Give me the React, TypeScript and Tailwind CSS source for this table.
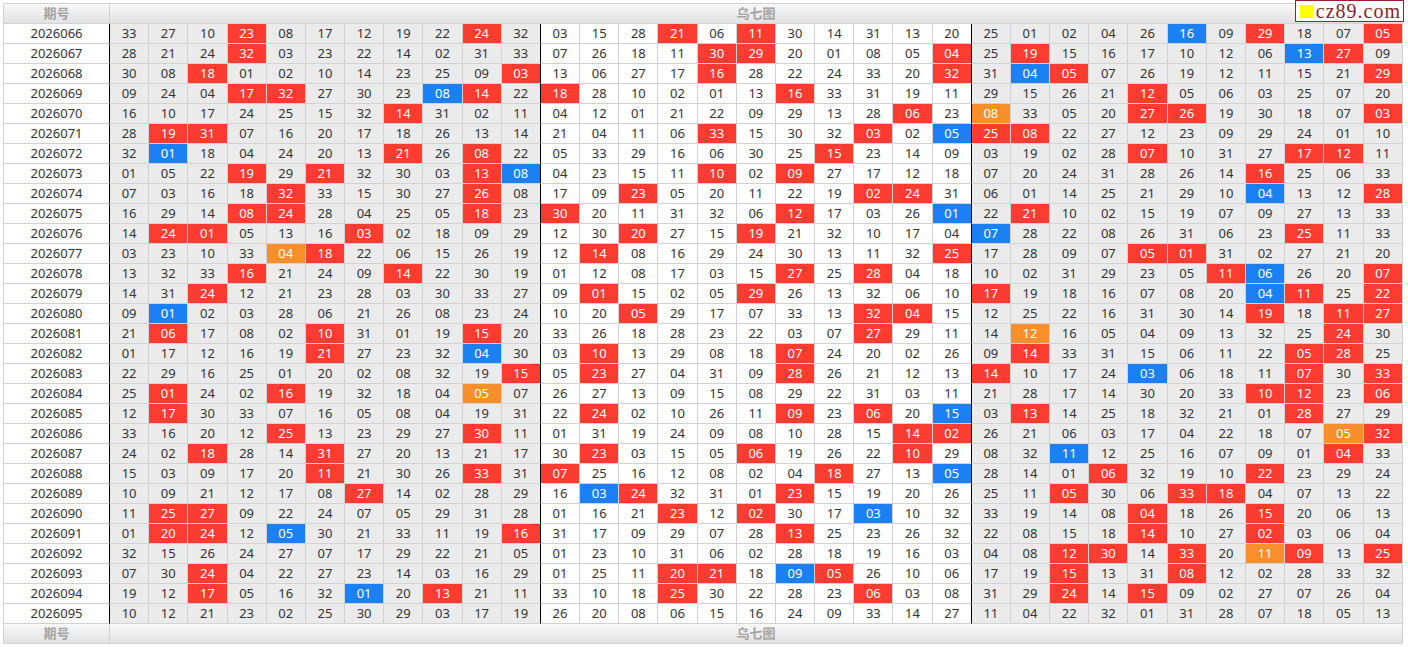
import React from "react";

const rows: [string, string][] = [
  ["2026066", "33 27 10 23r 08 17 12 19 22 24r 32 03 15 28 21r 06 11r 30 14 31 13 20 25 01 02 04 26 16b 09 29r 18 07 05r"],
  ["2026067", "28 21 24 32r 03 23 22 14 02 31 33 07 26 18 11 30r 29r 20 01 08 05 04r 25 19r 15 16 17 10 12 06 13b 27r 09"],
  ["2026068", "30 08 18r 01 02 10 14 23 25 09 03r 13 06 27 17 16r 28 22 24 33 20 32r 31 04b 05r 07 26 19 12 11 15 21 29r"],
  ["2026069", "09 24 04 17r 32r 27 30 23 08b 14r 22 18r 28 10 02 01 13 16r 33 31 19 11 29 15 26 21 12r 05 06 03 25 07 20"],
  ["2026070", "16 10 17 24 25 15 32 14r 31 02 11 04 12 01 21 22 09 29 13 28 06r 23 08o 33 05 20 27r 26r 19 30 18 07 03r"],
  ["2026071", "28 19r 31r 07 16 20 17 18 26 13 14 21 04 11 06 33r 15 30 32 03r 02 05b 25r 08r 22 27 12 23 09 29 24 01 10"],
  ["2026072", "32 01b 18 04 24 20 13 21r 26 08r 22 05 33 29 16 06 30 25 15r 23 14 09 03 19 02 28 07r 10 31 27 17r 12r 11"],
  ["2026073", "01 05 22 19r 29 21r 32 30 03 13r 08b 04 23 15 11 10r 02 09r 27 17 12 18 07 20 24 31 28 26 14 16r 25 06 33"],
  ["2026074", "07 03 16 18 32r 33 15 30 27 26r 08 17 09 23r 05 20 11 22 19 02r 24r 31 06 01 14 25 21 29 10 04b 13 12 28r"],
  ["2026075", "16 29 14 08r 24r 28 04 25 05 18r 23 30r 20 11 31 32 06 12r 17 03 26 01b 22 21r 10 02 15 19 07 09 27 13 33"],
  ["2026076", "14 24r 01r 05 13 16 03r 02 18 09 29 12 30 20r 27 15 19r 21 32 10 17 04 07b 28 22 08 26 31 06 23 25r 11 33"],
  ["2026077", "03 23 10 33 04o 18r 22 06 15 26 19 12 14r 08 16 29 24 30 13 11 32 25r 17 28 09 07 05r 01r 31 02 27 21 20"],
  ["2026078", "13 32 33 16r 21 24 09 14r 22 30 19 01 12 08 17 03 15 27r 25 28r 04 18 10 02 31 29 23 05 11r 06b 26 20 07r"],
  ["2026079", "14 31 24r 12 21 23 28 03 30 33 27 09 01r 15 02 05 29r 26 13 32 06 10 17r 19 18 16 07 08 20 04b 11r 25 22r"],
  ["2026080", "09 01b 02 03 28 06 21 26 08 23 24 10 20 05r 29 17 07 33 13 32r 04r 15 12 25 22 16 31 30 14 19r 18 11r 27r"],
  ["2026081", "21 06r 17 08 02 10r 31 01 19 15r 20 33 26 18 28 23 22 03 07 27r 29 11 14 12o 16 05 04 09 13 32 25 24r 30"],
  ["2026082", "01 17 12 16 19 21r 27 23 32 04b 30 03 10r 13 29 08 18 07r 24 20 02 26 09 14r 33 31 15 06 11 22 05r 28r 25"],
  ["2026083", "22 29 16 25 01 20 02 08 32 19 15r 05 23r 27 04 31 09 28r 26 21 12 13 14r 10 17 24 03b 06 18 11 07r 30 33r"],
  ["2026084", "25 01r 24 02 16r 19 32 18 04 05o 07 26 27 13 09 15 08 29 22 31 03 11 21 28 17 14 30 20 33 10r 12r 23 06r"],
  ["2026085", "12 17r 30 33 07 16 05 08 04 19 31 22 24r 02 10 26 11 09r 23 06r 20 15b 03 13r 14 25 18 32 21 01 28r 27 29"],
  ["2026086", "33 16 20 12 25r 13 23 29 27 30r 11 01 31 19 24 09 08 10 28 15 14r 02r 26 21 06 03 17 04 22 18 07 05o 32r"],
  ["2026087", "24 02 18r 28 14 31r 27 20 13 21 17 30 23r 03 15 05 06r 19 26 22 10r 29 08 32 11b 12 25 16 07 09 01 04r 33"],
  ["2026088", "15 03 09 17 20 11r 21 30 26 33r 31 07r 25 16 12 08 02 04 18r 27 13 05b 28 14 01 06r 32 19 10 22r 23 29 24"],
  ["2026089", "10 09 21 12 17 08 27r 14 02 28 29 16 03b 24r 32 31 01 23r 15 19 20 26 25 11 05r 30 06 33r 18r 04 07 13 22"],
  ["2026090", "11 25r 27r 09 22 24 07 05 29 31 28 01 16 21 23r 12 02r 30 17 03b 10 32 33 19 14 08 04r 18 26 15r 20 06 13"],
  ["2026091", "01 20r 24r 12 05b 30 21 33 11 19 16r 31 17 09 29 07 28 13r 25 23 26 32 22 08 15 18 14r 10 27 02r 03 06 04"],
  ["2026092", "32 15 26 24 27 07 17 29 22 21 05 01 23 10 31 06 02 28 18 19 16 03 04 08 12r 30r 14 33r 20 11o 09r 13 25r"],
  ["2026093", "07 30 24r 04 22 27 23 14 03 16 29 01 25 11 20r 21r 18 09b 05r 26 10 06 17 19 15r 13 31 08r 12 02 28 33 32"],
  ["2026094", "19 12 17r 05 16 32 01b 20 13r 21 11 33 10 18 25r 30 22 28 23 06r 03 08 31 29 24r 14 15r 09 02 27 07 26 04"],
  ["2026095", "10 12 21 23 02 25 30 29 03 17 19 26 20 08 06 15 16 24 09 33 14 27 11 04 22 32 01 31 28 07 18 05 13"],
];

const hit: Record<string, string> = {
  r: "bg-[#fc3b31] text-white",
  b: "bg-[#1b80f4] text-white",
  o: "bg-[#f98f2b] text-white",
};

function HeadRow() {
  return (
    <tr className="h-[20px] bg-linear-to-b from-[#f8f8f8] to-[#e1e1e1] text-[13px] font-bold text-[#a3a3a3]">
      <td className="border-r border-b border-[#d2d2d2] text-center">期号</td>
      <td colSpan={33} className="border-r border-b border-[#d2d2d2] text-center">
        乌七图
      </td>
    </tr>
  );
}

export default function App() {
  return (
    <div
      className="relative min-h-[647px] bg-white pt-[3px] pl-[3px] text-[#333]"
      style={{ fontFamily: '"Noto Sans", "Noto Sans CJK SC", sans-serif' }}
    >
      <table className="w-[1400px] table-fixed border-separate border-spacing-0 border-t border-l border-[#d2d2d2] text-[13px] leading-none">
        <colgroup>
          <col className="w-[106px]" />
          {Array.from({ length: 33 }, (_, i) => (
            <col key={i} />
          ))}
        </colgroup>
        <thead>
          <HeadRow />
        </thead>
        <tbody>
          {rows.map(([issue, line]) => (
            <tr key={issue} className="h-[20px]">
              <td className="border-r border-b border-r-black border-b-[#d2d2d2] bg-white text-center">
                {issue}
              </td>
              {line.split(" ").map((tok, i) => {
                const mark = tok.slice(2);
                const group = Math.floor(i / 11);
                const base = group === 1 ? "bg-white" : "bg-[#ebebeb]";
                const edge = i === 10 || i === 21 ? "border-r-black" : "border-r-[#d2d2d2]";
                return (
                  <td
                    key={i}
                    className={`border-r border-b border-b-[#d2d2d2] p-0 text-center ${edge} ${
                      mark ? hit[mark] : base
                    }`}
                  >
                    {tok.slice(0, 2)}
                  </td>
                );
              })}
            </tr>
          ))}
        </tbody>
        <tfoot>
          <HeadRow />
        </tfoot>
      </table>

      {/* site badge over the header's right end */}
      <div className="absolute top-0 right-[4px] flex h-[22px] items-center gap-[3px] border border-[#a31a30] bg-white pr-[2px] pl-[4px]">
        <span className="h-[13px] w-[13px] bg-[#ffff00]" />
        <span
          className="text-[20px] leading-none tracking-[1px] text-[#8e1c2d]"
          style={{ fontFamily: '"Liberation Serif", "DejaVu Serif", serif' }}
        >
          cz89.com
        </span>
      </div>
    </div>
  );
}
